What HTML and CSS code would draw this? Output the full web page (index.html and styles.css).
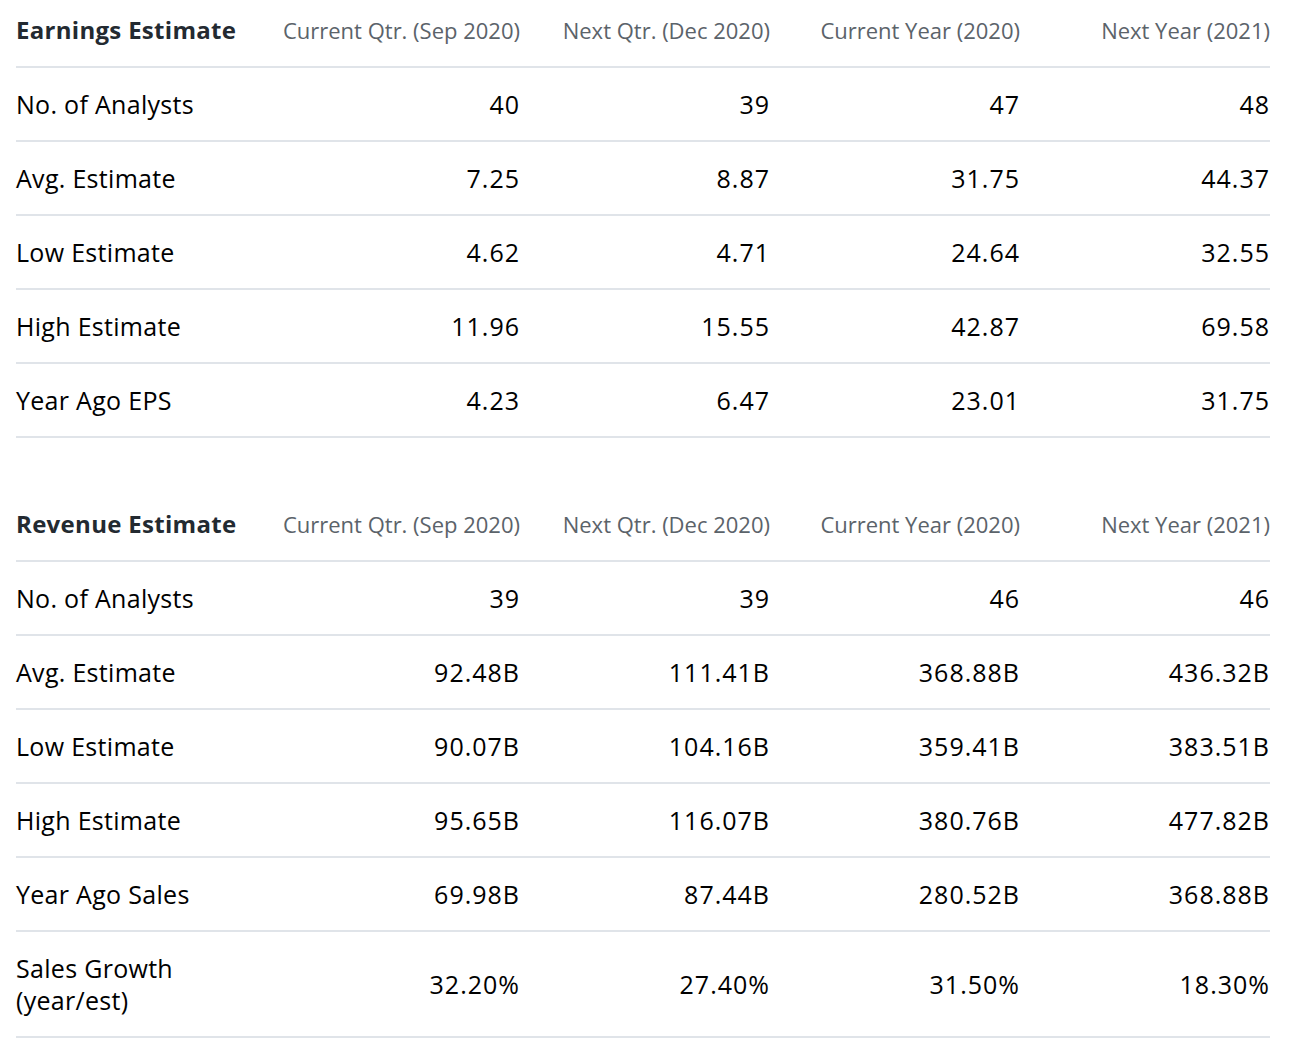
FILE: index.html
```html
<!DOCTYPE html>
<html>
<head>
<meta charset="utf-8">
<link rel="stylesheet" href="styles.css">
</head>
<body>
<div class="wrap">
  <table class="est">
    <thead>
      <tr>
        <th class="title">Earnings Estimate</th>
        <th>Current Qtr. (Sep 2020)</th>
        <th>Next Qtr. (Dec 2020)</th>
        <th>Current Year (2020)</th>
        <th>Next Year (2021)</th>
      </tr>
    </thead>
    <tbody>
      <tr><td>No. of Analysts</td><td>40</td><td>39</td><td>47</td><td>48</td></tr>
      <tr><td>Avg. Estimate</td><td>7.25</td><td>8.87</td><td>31.75</td><td>44.37</td></tr>
      <tr><td>Low Estimate</td><td>4.62</td><td>4.71</td><td>24.64</td><td>32.55</td></tr>
      <tr><td>High Estimate</td><td>11.96</td><td>15.55</td><td>42.87</td><td>69.58</td></tr>
      <tr><td>Year Ago EPS</td><td>4.23</td><td>6.47</td><td>23.01</td><td>31.75</td></tr>
    </tbody>
  </table>

  <table class="est second">
    <thead>
      <tr>
        <th class="title">Revenue Estimate</th>
        <th>Current Qtr. (Sep 2020)</th>
        <th>Next Qtr. (Dec 2020)</th>
        <th>Current Year (2020)</th>
        <th>Next Year (2021)</th>
      </tr>
    </thead>
    <tbody>
      <tr><td>No. of Analysts</td><td>39</td><td>39</td><td>46</td><td>46</td></tr>
      <tr><td>Avg. Estimate</td><td>92.48B</td><td>111.41B</td><td>368.88B</td><td>436.32B</td></tr>
      <tr><td>Low Estimate</td><td>90.07B</td><td>104.16B</td><td>359.41B</td><td>383.51B</td></tr>
      <tr><td>High Estimate</td><td>95.65B</td><td>116.07B</td><td>380.76B</td><td>477.82B</td></tr>
      <tr><td>Year Ago Sales</td><td>69.98B</td><td>87.44B</td><td>280.52B</td><td>368.88B</td></tr>
      <tr><td>Sales Growth<br>(year/est)</td><td>32.20%</td><td>27.40%</td><td>31.50%</td><td>18.30%</td></tr>
    </tbody>
  </table>
</div>
</body>
</html>
```
FILE: styles.css
```css
html, body {
  margin: 0;
  padding: 0;
  background: #fff;
}
body {
  font-family: "Open Sans", "Noto Sans", "Liberation Sans", sans-serif;
  color: #000;
}
.wrap {
  width: 1254px;
  margin-left: 16px;
}
.est {
  width: 1254px;
  border-collapse: collapse;
  table-layout: fixed;
}
.second {
  margin-top: 56px;
}
.est th,
.est td {
  padding: 0;
  text-align: right;
  vertical-align: middle;
  border-bottom: 2px solid #e0e4e9;
  width: 250px;
  white-space: nowrap;
}
.est th:first-child,
.est td:first-child {
  width: 254px;
  text-align: left;
}
.est th {
  height: 60px;
  padding-bottom: 6px;
  font-size: 22px;
  font-weight: 400;
  color: #5b636a;
  line-height: 30px;
}
.est th.title {
  font-size: 24px;
  font-weight: 700;
  letter-spacing: 0.3px;
  color: #232a31;
}
.est td {
  font-size: 25px;
  line-height: 32px;
  padding: 20px 0;
  letter-spacing: 1px;
}
.est td:first-child {
  letter-spacing: 0.3px;
}
```
